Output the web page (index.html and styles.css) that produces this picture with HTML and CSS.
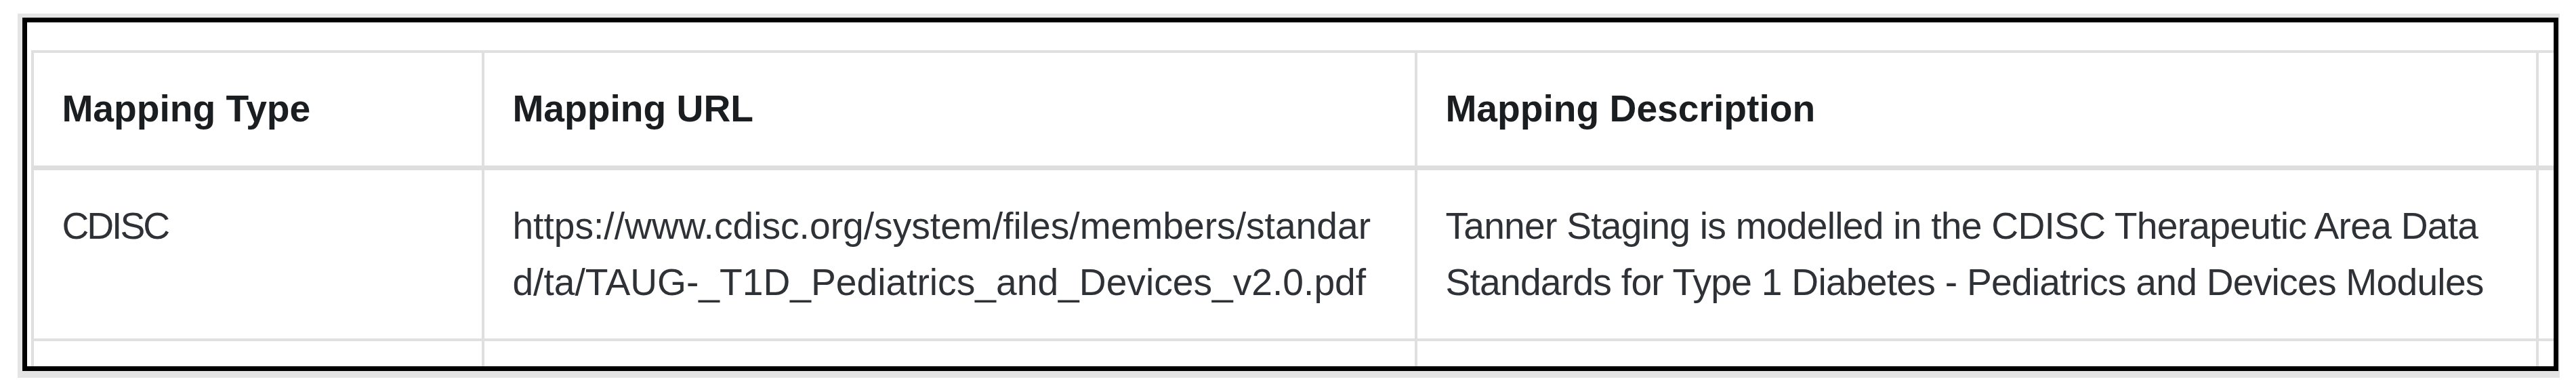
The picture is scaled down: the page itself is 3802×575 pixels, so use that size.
FILE: index.html
```html
<!DOCTYPE html>
<html lang="en">
<head>
<meta charset="utf-8">
<title>Mapping</title>
<link rel="stylesheet" href="styles.css">
</head>
<body>
<div class="shot">
  <div class="frame">
    <div class="grid" role="table">
      <div class="cell head" role="columnheader">Mapping Type</div>
      <div class="cell head" role="columnheader">Mapping URL</div>
      <div class="cell head" role="columnheader">Mapping Description</div>
      <div class="cell head" role="columnheader"></div>

      <div class="cell caps" role="cell">CDISC</div>
      <div class="cell url" role="cell">https://www.cdisc.org/system/files/members/standard/ta/TAUG-_T1D_Pediatrics_and_Devices_v2.0.pdf</div>
      <div class="cell desc" role="cell">Tanner Staging is modelled in the CDISC Therapeutic Area Data Standards for Type 1 Diabetes - Pediatrics and Devices Modules</div>
      <div class="cell" role="cell"></div>

      <div class="cell empty" role="cell"></div>
      <div class="cell empty" role="cell"></div>
      <div class="cell empty" role="cell"></div>
      <div class="cell empty" role="cell"></div>
    </div>
  </div>
</div>
</body>
</html>
```
FILE: styles.css
```css
html, body {
  margin: 0;
  padding: 0;
  background: #ffffff;
}

body {
  font-family: "Liberation Sans", Arial, sans-serif;
  color: #212529;
}

.shot {
  box-sizing: border-box;
  width: 3752px;
  height: 537px;
  margin: 20px 0 0 26px;
  padding: 6px 2px 10px 7px;
  background: #e4e4e4;
}

.frame {
  box-sizing: border-box;
  height: 100%;
  border: 7px solid #000000;
  background: #ffffff;
  overflow: hidden;
  padding: 41px 0 0 6px;
}

.grid {
  display: grid;
  grid-template-columns: 665px 1377px 1655px 320px;
  width: 4017px;
}

.cell {
  box-sizing: border-box;
  border-left: 4px solid #dfdfdf;
  border-bottom: 4px solid #e0e0e0;
  padding: 41.4px;
  font-size: 55.2px;
  line-height: 82.8px;
  color: #2e3236;
}

.head {
  border-top: 4px solid #e0e0e0;
  border-bottom: 7px solid #dedede;
  font-weight: bold;
  color: #1b1e21;
}

.caps {
  letter-spacing: -3px;
}

.url {
  word-break: break-all;
}

.desc {
  letter-spacing: -0.75px;
}

.empty {
  min-height: 166px;
}
```
